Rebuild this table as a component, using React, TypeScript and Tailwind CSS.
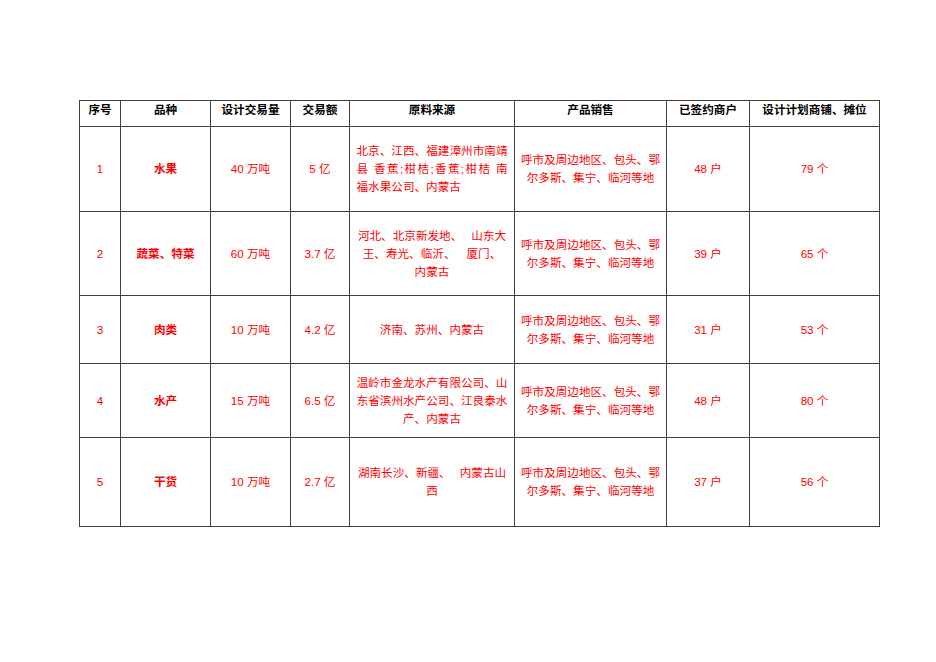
import React from "react";

const FONT = '"Liberation Sans", "Noto Sans CJK SC", sans-serif';

const headers = ["序号", "品种", "设计交易量", "交易额", "原料来源", "产品销售", "已签约商户", "设计计划商铺、摊位"];

const Sp = ({ w }: { w: string }) => <span className={`inline-block ${w}`} />;

const Product = () => (
  <div className="flex flex-col items-center">
    <div>呼市及周边地区、包头、鄂</div>
    <div>尔多斯、集宁、临河等地</div>
  </div>
);

const Cell = ({ children, bold }: { children?: React.ReactNode; bold?: boolean }) => (
  <div
    className={`bg-white flex items-center justify-center text-center text-[#ff0000] leading-[18px] whitespace-nowrap ${
      bold ? "font-bold" : "font-normal"
    }`}
  >
    {children}
  </div>
);

export default function App() {
  const rows: {
    n: string;
    kind: string;
    vol: string;
    amt: string;
    src: React.ReactNode;
    shops: string;
    stalls: string;
  }[] = [
    {
      n: "1",
      kind: "水果",
      vol: "40 万吨",
      amt: "5 亿",
      src: (
        <div className="w-[151px] text-left">
          <div className="text-justify [text-align-last:justify]">北京、江西、福建漳州市南靖</div>
          <div className="text-justify [text-align-last:justify] whitespace-pre">县 香蕉;柑桔;香蕉;柑桔 南</div>
          <div>福水果公司、内蒙古</div>
        </div>
      ),
      shops: "48 户",
      stalls: "79 个",
    },
    {
      n: "2",
      kind: "蔬菜、特菜",
      vol: "60 万吨",
      amt: "3.7 亿",
      src: (
        <div className="flex flex-col items-center">
          <div>
            河北、北京新发地、
            <Sp w="w-[9px]" />
            山东大
          </div>
          <div>
            王、寿光、临沂、
            <Sp w="w-[11px]" />
            厦门、
          </div>
          <div>内蒙古</div>
        </div>
      ),
      shops: "39 户",
      stalls: "65 个",
    },
    {
      n: "3",
      kind: "肉类",
      vol: "10 万吨",
      amt: "4.2 亿",
      src: <div>济南、苏州、内蒙古</div>,
      shops: "31 户",
      stalls: "53 个",
    },
    {
      n: "4",
      kind: "水产",
      vol: "15 万吨",
      amt: "6.5 亿",
      src: (
        <div className="flex flex-col items-center">
          <div>温岭市金龙水产有限公司、山</div>
          <div>东省滨州水产公司、江良泰水</div>
          <div>产、内蒙古</div>
        </div>
      ),
      shops: "48 户",
      stalls: "80 个",
    },
    {
      n: "5",
      kind: "干货",
      vol: "10 万吨",
      amt: "2.7 亿",
      src: (
        <div className="flex flex-col items-center">
          <div>
            湖南长沙、新疆、
            <Sp w="w-[9px]" />
            内蒙古山
          </div>
          <div>西</div>
        </div>
      ),
      shops: "37 户",
      stalls: "56 个",
    },
  ];

  return (
    <div className="min-h-screen bg-white pt-[100px] pl-[79px] text-[11.6px]" style={{ fontFamily: FONT }}>
      <div className="inline-grid gap-px bg-[#404040] p-px grid-cols-[40px_89px_79px_58px_164px_151px_82px_129px] grid-rows-[25px_84px_83px_67px_73px_88px]">
        {headers.map((h) => (
          <div
            key={h}
            className="bg-white flex items-start justify-center text-center font-bold text-black leading-[18px] whitespace-nowrap"
          >
            {h}
          </div>
        ))}
        {rows.map((r) => (
          <React.Fragment key={r.n}>
            <Cell>{r.n}</Cell>
            <Cell bold>{r.kind}</Cell>
            <Cell>{r.vol}</Cell>
            <Cell>{r.amt}</Cell>
            <Cell>{r.src}</Cell>
            <Cell>
              <Product />
            </Cell>
            <Cell>{r.shops}</Cell>
            <Cell>{r.stalls}</Cell>
          </React.Fragment>
        ))}
      </div>
    </div>
  );
}
